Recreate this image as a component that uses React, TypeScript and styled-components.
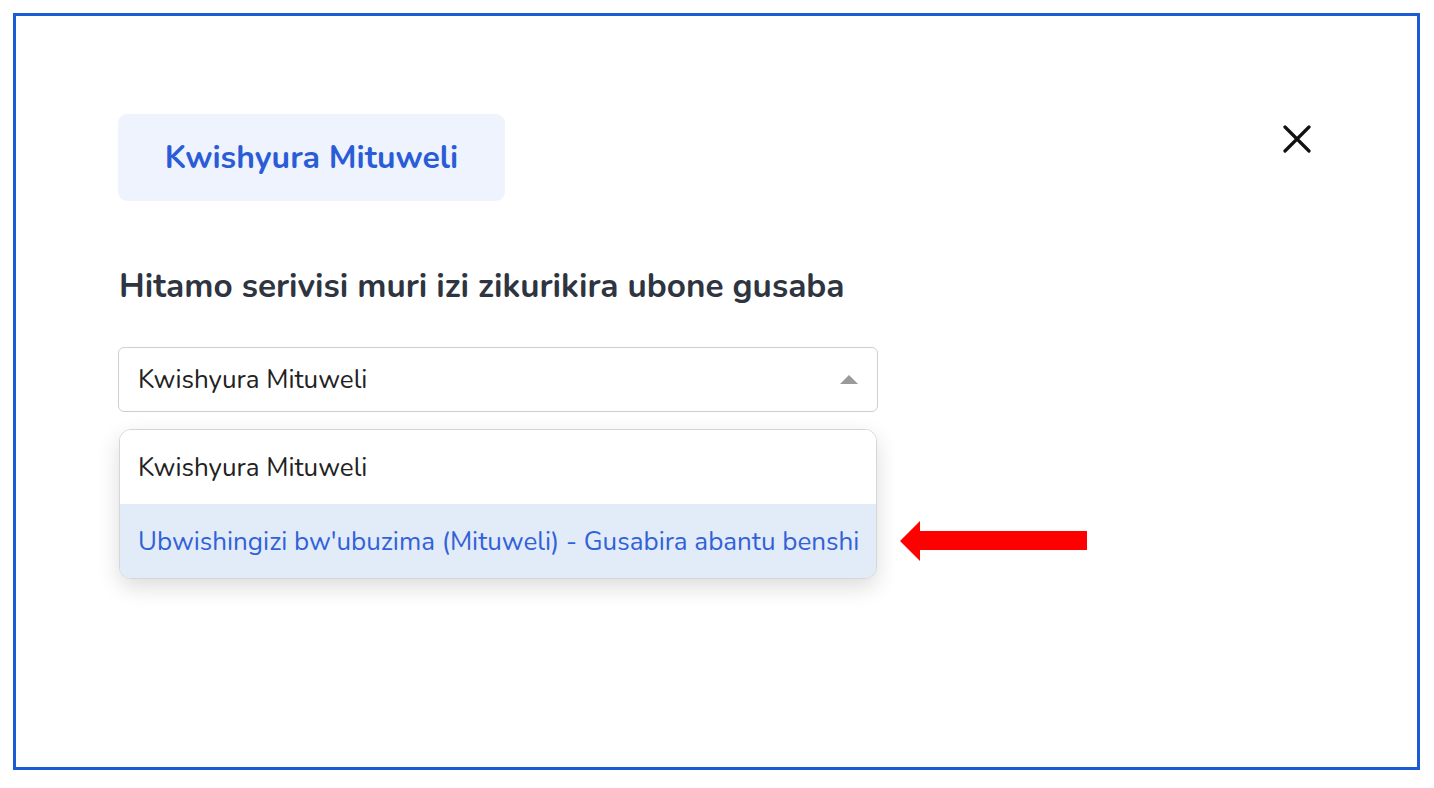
import React from 'react';
import styled, { createGlobalStyle } from 'styled-components';

const GlobalStyle = createGlobalStyle`
  html, body {
    margin: 0;
    padding: 0;
    background: #ffffff;
  }
  body {
    font-family: 'Nunito', 'Lato', 'Noto Sans', sans-serif;
  }
`;

// Outer blue frame around the whole modal
const Frame = styled.div`
  box-sizing: border-box;
  margin: 13px;
  width: 1407px;
  height: 757px;
  border: 3px solid #1a5bd6;
  background: #ffffff;
  padding: 98px 106px 0 102px;
`;

const Header = styled.div`
  display: flex;
  justify-content: space-between;
  align-items: flex-start;
`;

const Badge = styled.div`
  box-sizing: border-box;
  width: 387px;
  height: 87px;
  display: flex;
  align-items: center;
  justify-content: center;
  background: #eef3fd;
  border-radius: 9px;
  color: #2b5cd8;
  font-size: 32px;
  font-weight: 700;
`;

const CloseButton = styled.button`
  margin-top: 11px;
  width: 28px;
  height: 28px;
  padding: 0;
  border: none;
  background: transparent;
  cursor: pointer;
  display: flex;
  align-items: center;
  justify-content: center;
`;

const Heading = styled.h2`
  margin: 65px 0 0 1px;
  font-size: 33.3px;
  line-height: 40px;
  font-weight: 700;
  color: #2e3440;
`;

const SelectWrap = styled.div`
  position: relative;
  margin-top: 41px;
  width: 760px;
  display: flex;
  align-items: center;
`;

const SelectBox = styled.div`
  box-sizing: border-box;
  width: 100%;
  height: 65px;
  border: 1.5px solid #cfcfcf;
  border-radius: 6px;
  padding: 0 19px;
  display: flex;
  align-items: center;
  justify-content: space-between;
  font-size: 26px;
  color: #222222;
`;

const Caret = styled.span`
  width: 0;
  height: 0;
  border-left: 9px solid transparent;
  border-right: 9px solid transparent;
  border-bottom: 9px solid #9a9a9a;
`;

const Menu = styled.ul`
  position: absolute;
  top: calc(100% + 17px);
  left: 1px;
  right: 1px;
  margin: 0;
  padding: 0;
  list-style: none;
  border: 1.5px solid #d6d6d6;
  border-radius: 12px;
  overflow: hidden;
  background: #ffffff;
  box-shadow: 0 8px 22px rgba(0, 0, 0, 0.14);
`;

const Option = styled.li<{ $active?: boolean }>`
  height: 74px;
  display: flex;
  align-items: center;
  padding: 0 18px;
  font-size: 26px;
  white-space: nowrap;
  color: ${p => (p.$active ? '#3361d8' : '#222222')};
  background: ${p => (p.$active ? '#e1ecf8' : '#ffffff')};
`;

const Pointer = styled.svg`
  position: absolute;
  left: 782px;
  top: 174px;
`;

const options = [
  'Kwishyura Mituweli',
  "Ubwishingizi bw'ubuzima (Mituweli) - Gusabira abantu benshi",
];

export default function App() {
  return (
    <>
      <GlobalStyle />
      <Frame>
        <Header>
          <Badge>Kwishyura Mituweli</Badge>
          <CloseButton aria-label="close">
            <svg width="28" height="28" viewBox="0 0 28 28">
              <path d="M2 2 L26 26 M26 2 L2 26" stroke="#111" strokeWidth="3.2" strokeLinecap="round" />
            </svg>
          </CloseButton>
        </Header>
        <Heading>Hitamo serivisi muri izi zikurikira ubone gusaba</Heading>
        <SelectWrap>
          <SelectBox>
            <span>Kwishyura Mituweli</span>
            <Caret />
          </SelectBox>
          <Menu>
            {options.map((o, i) => (
              <Option key={o} $active={i === 1}>{o}</Option>
            ))}
          </Menu>
          <Pointer width="188" height="40" viewBox="0 0 188 40">
            <polygon points="0,20 20,0 20,10 187,10 187,29 20,29 20,40" fill="#ff0000" />
          </Pointer>
        </SelectWrap>
      </Frame>
    </>
  );
}
